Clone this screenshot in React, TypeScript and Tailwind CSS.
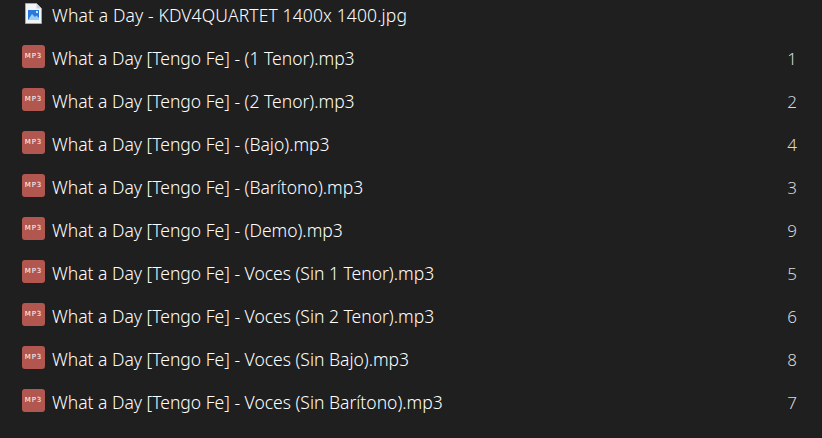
import React from "react";

const rows = [
  { name: "What a Day [Tengo Fe] - (1 Tenor).mp3", track: "1" },
  { name: "What a Day [Tengo Fe] - (2 Tenor).mp3", track: "2" },
  { name: "What a Day [Tengo Fe] - (Bajo).mp3", track: "4" },
  { name: "What a Day [Tengo Fe] - (Barítono).mp3", track: "3" },
  { name: "What a Day [Tengo Fe] - (Demo).mp3", track: "9" },
  { name: "What a Day [Tengo Fe] - Voces (Sin 1 Tenor).mp3", track: "5" },
  { name: "What a Day [Tengo Fe] - Voces (Sin 2 Tenor).mp3", track: "6" },
  { name: "What a Day [Tengo Fe] - Voces (Sin Bajo).mp3", track: "8" },
  { name: "What a Day [Tengo Fe] - Voces (Sin Barítono).mp3", track: "7" },
];

function ImageIcon() {
  return (
    <svg width="17" height="21" viewBox="0 0 17 21" className="shrink-0">
      <path d="M0.5 0.5H11.5L16.5 5.5V20.5H0.5Z" fill="#f2f5f8" stroke="#a3a8ad" />
      <path d="M11.5 0.5V5.5H16.5Z" fill="#cdd2d6" />
      <rect x="3" y="7" width="11" height="10" fill="#2a78dc" />
      <path d="M3 17L7 11L10 14L11.5 12.5L14 15V17Z" fill="#9ccdf5" />
      <rect x="11" y="8" width="2" height="2" fill="#cfe8fb" />
    </svg>
  );
}

function Mp3Icon() {
  return (
    <div className="flex h-[23px] w-[23px] shrink-0 items-center justify-center rounded-[3px] bg-[#b25750]">
      <span className="font-['DejaVu_Sans',sans-serif] text-[7px] font-normal leading-none tracking-[0.9px] text-white">MP3</span>
    </div>
  );
}

export default function App() {
  return (
    <div className="h-[438px] w-[822px] overflow-hidden bg-[#1f1f1f] font-['Noto_Sans',sans-serif] font-light text-white">
      <div className="-mt-[6px] flex h-[43px] items-center pl-[22px] pr-[25px]">
        <div className="flex w-[30px] shrink-0 -translate-y-[2px] pl-[3px]">
          <ImageIcon />
        </div>
        <span className="text-[17.5px] leading-none tracking-[0.13px]">What a Day - KDV4QUARTET 1400x 1400.jpg</span>
      </div>
      {rows.map((row) => (
        <div key={row.name} className="flex h-[43px] items-center justify-between pl-[22px] pr-[25px]">
          <div className="flex items-center">
            <div className="flex w-[30px] shrink-0 -translate-y-[2px]">
              <Mp3Icon />
            </div>
            <span className="text-[17.5px] leading-none">{row.name}</span>
          </div>
          <span className="text-[17px] leading-none text-[#d8d8d8]">{row.track}</span>
        </div>
      ))}
    </div>
  );
}
